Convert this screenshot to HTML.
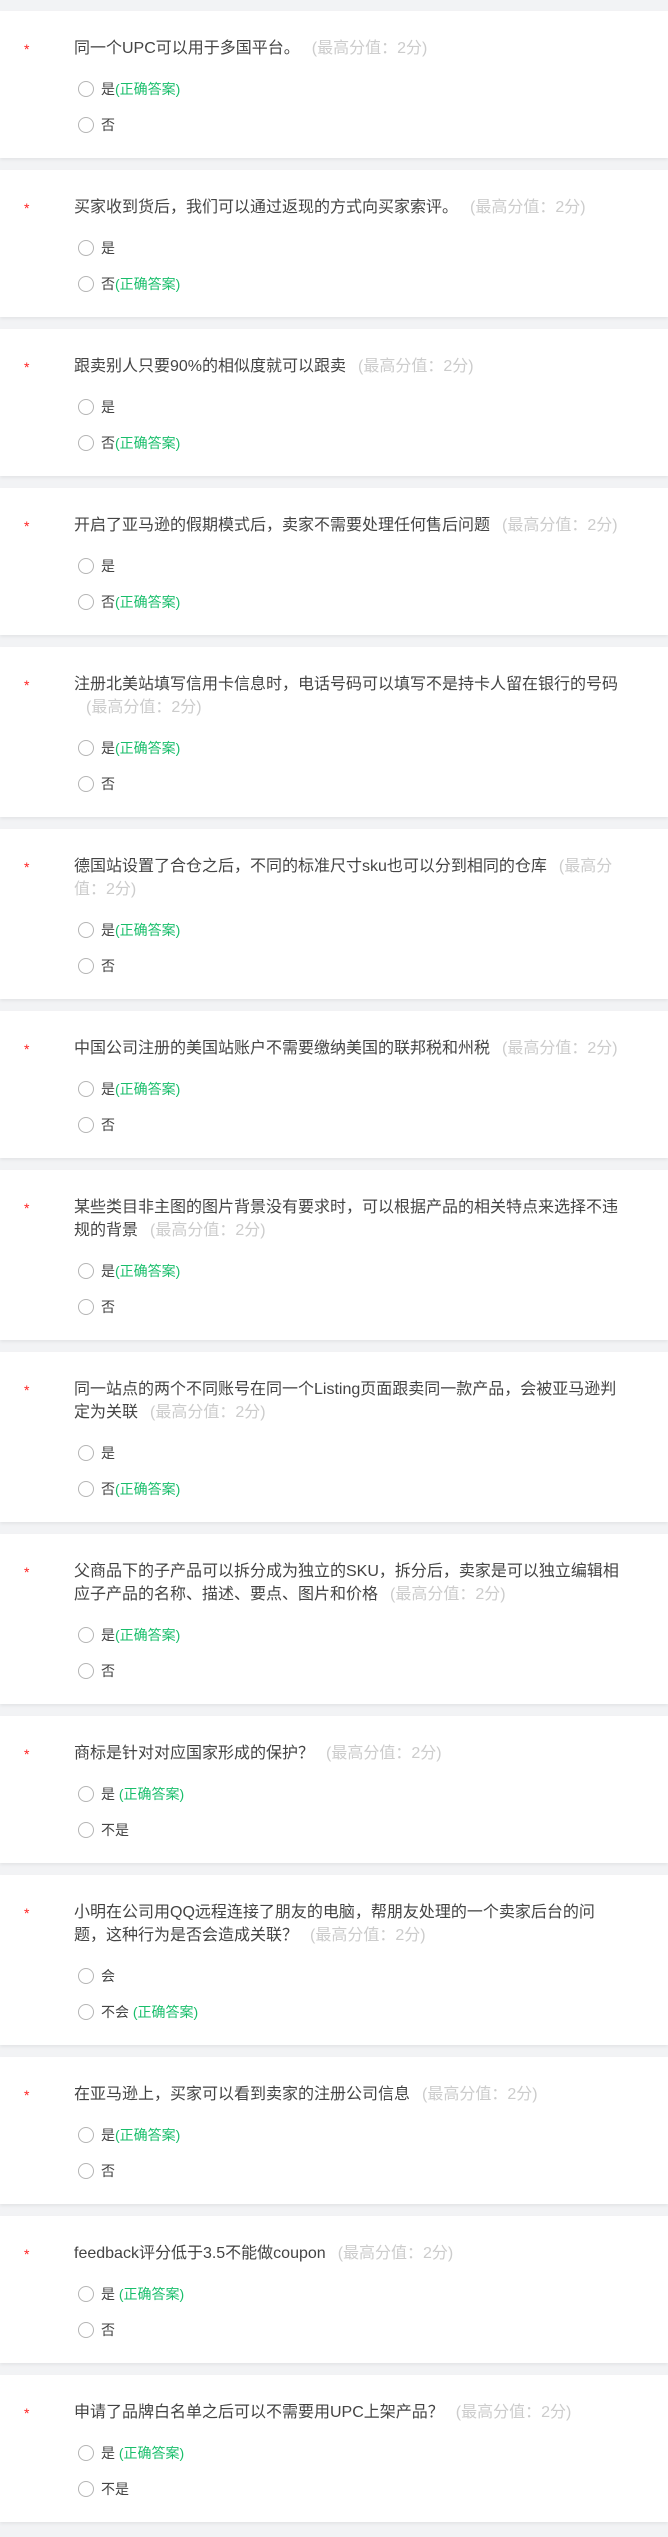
<!DOCTYPE html>
<html><head><meta charset="utf-8">
<style>
*{margin:0;padding:0;box-sizing:border-box}
body{width:668px;height:2537px;background:#f2f3f5;font-family:"Liberation Sans","Noto Sans CJK SC",sans-serif;overflow:hidden;padding-top:11px}
.card{background:#fff;margin-bottom:12px;padding:26px 48px 15px 74px;position:relative;box-shadow:0 2px 3px rgba(0,0,0,0.06)}
.star{position:absolute;left:24px;top:30px;color:#f22;font-size:14px}
.q{font-size:16px;line-height:23px;color:#444}
.s{color:#ccc;margin-left:12px}
.opt{height:36px;display:flex;align-items:center;padding-left:4px;font-size:14px;color:#444}
.opts{margin-top:11px}
.r{width:16px;height:16px;border:1px solid #b5b5b5;border-radius:50%;margin-right:7px;flex:none}
.g{color:#19be6b}
</style></head><body>

<div class="card"><span class="star">*</span><div class="q">同一个UPC可以用于多国平台。<span class="s">(最高分值：2分)</span></div><div class="opts"><div class="opt"><span class="r"></span>是<span class="g">(正确答案)</span></div><div class="opt"><span class="r"></span>否</div></div></div>

<div class="card"><span class="star">*</span><div class="q">买家收到货后，我们可以通过返现的方式向买家索评。<span class="s">(最高分值：2分)</span></div><div class="opts"><div class="opt"><span class="r"></span>是</div><div class="opt"><span class="r"></span>否<span class="g">(正确答案)</span></div></div></div>

<div class="card"><span class="star">*</span><div class="q">跟卖别人只要90%的相似度就可以跟卖<span class="s">(最高分值：2分)</span></div><div class="opts"><div class="opt"><span class="r"></span>是</div><div class="opt"><span class="r"></span>否<span class="g">(正确答案)</span></div></div></div>

<div class="card"><span class="star">*</span><div class="q">开启了亚马逊的假期模式后，卖家不需要处理任何售后问题<span class="s">(最高分值：2分)</span></div><div class="opts"><div class="opt"><span class="r"></span>是</div><div class="opt"><span class="r"></span>否<span class="g">(正确答案)</span></div></div></div>

<div class="card"><span class="star">*</span><div class="q">注册北美站填写信用卡信息时，电话号码可以填写不是持卡人留在银行的号码<span class="s">(最高分值：2分)</span></div><div class="opts"><div class="opt"><span class="r"></span>是<span class="g">(正确答案)</span></div><div class="opt"><span class="r"></span>否</div></div></div>

<div class="card"><span class="star">*</span><div class="q">德国站设置了合仓之后，不同的标准尺寸sku也可以分到相同的仓库<span class="s">(最高分值：2分)</span></div><div class="opts"><div class="opt"><span class="r"></span>是<span class="g">(正确答案)</span></div><div class="opt"><span class="r"></span>否</div></div></div>

<div class="card"><span class="star">*</span><div class="q">中国公司注册的美国站账户不需要缴纳美国的联邦税和州税<span class="s">(最高分值：2分)</span></div><div class="opts"><div class="opt"><span class="r"></span>是<span class="g">(正确答案)</span></div><div class="opt"><span class="r"></span>否</div></div></div>

<div class="card"><span class="star">*</span><div class="q">某些类目非主图的图片背景没有要求时，可以根据产品的相关特点来选择不违规的背景<span class="s">(最高分值：2分)</span></div><div class="opts"><div class="opt"><span class="r"></span>是<span class="g">(正确答案)</span></div><div class="opt"><span class="r"></span>否</div></div></div>

<div class="card"><span class="star">*</span><div class="q">同一站点的两个不同账号在同一个Listing页面跟卖同一款产品，会被亚马逊判定为关联<span class="s">(最高分值：2分)</span></div><div class="opts"><div class="opt"><span class="r"></span>是</div><div class="opt"><span class="r"></span>否<span class="g">(正确答案)</span></div></div></div>

<div class="card"><span class="star">*</span><div class="q">父商品下的子产品可以拆分成为独立的SKU，拆分后，卖家是可以独立编辑相应子产品的名称、描述、要点、图片和价格<span class="s">(最高分值：2分)</span></div><div class="opts"><div class="opt"><span class="r"></span>是<span class="g">(正确答案)</span></div><div class="opt"><span class="r"></span>否</div></div></div>

<div class="card"><span class="star">*</span><div class="q">商标是针对对应国家形成的保护？<span class="s">(最高分值：2分)</span></div><div class="opts"><div class="opt"><span class="r"></span>是&nbsp;<span class="g">(正确答案)</span></div><div class="opt"><span class="r"></span>不是</div></div></div>

<div class="card"><span class="star">*</span><div class="q">小明在公司用QQ远程连接了朋友的电脑，帮朋友处理的一个卖家后台的问题，这种行为是否会造成关联？<span class="s">(最高分值：2分)</span></div><div class="opts"><div class="opt"><span class="r"></span>会</div><div class="opt"><span class="r"></span>不会&nbsp;<span class="g">(正确答案)</span></div></div></div>

<div class="card"><span class="star">*</span><div class="q">在亚马逊上，买家可以看到卖家的注册公司信息<span class="s">(最高分值：2分)</span></div><div class="opts"><div class="opt"><span class="r"></span>是<span class="g">(正确答案)</span></div><div class="opt"><span class="r"></span>否</div></div></div>

<div class="card"><span class="star">*</span><div class="q">feedback评分低于3.5不能做coupon<span class="s">(最高分值：2分)</span></div><div class="opts"><div class="opt"><span class="r"></span>是&nbsp;<span class="g">(正确答案)</span></div><div class="opt"><span class="r"></span>否</div></div></div>

<div class="card"><span class="star">*</span><div class="q">申请了品牌白名单之后可以不需要用UPC上架产品？<span class="s">(最高分值：2分)</span></div><div class="opts"><div class="opt"><span class="r"></span>是&nbsp;<span class="g">(正确答案)</span></div><div class="opt"><span class="r"></span>不是</div></div></div>

</body></html>
